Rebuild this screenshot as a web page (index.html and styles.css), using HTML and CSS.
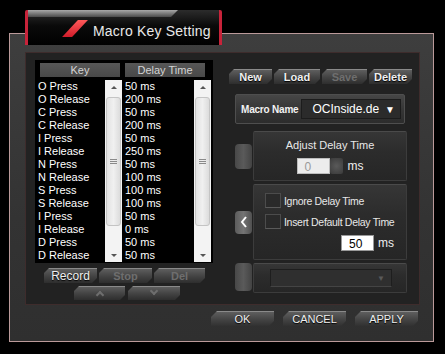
FILE: index.html
```html
<!DOCTYPE html>
<html lang="en">
<head>
  <meta charset="UTF-8" />
  <title>Macro Key Setting</title>
  <link rel="stylesheet" href="styles.css">
</head>
<body>
  <div class="screen">
    <!-- Title tab -->
    <div class="tab">
      <span class="tab-slash"></span>
      <span class="tab-title">Macro Key Setting</span>
    </div>

    <div class="frame">
      <div class="panel">
        <!-- Left: macro event list -->
        <div class="left">
          <div class="list">
            <div class="col col-key">
              <div class="col-head">Key</div>
              <div class="col-body">
                <ul class="rows">
                  <li>O Press</li>
                  <li>O Release</li>
                  <li>C Press</li>
                  <li>C Release</li>
                  <li>I Press</li>
                  <li>I Release</li>
                  <li>N Press</li>
                  <li>N Release</li>
                  <li>S Press</li>
                  <li>S Release</li>
                  <li>I Press</li>
                  <li>I Release</li>
                  <li>D Press</li>
                  <li>D Release</li>
                </ul>
                <div class="scrollbar">
                  <div class="sb-btn"><span class="arr-up"></span></div>
                  <div class="sb-track"><div class="sb-thumb"><span class="grip"></span></div></div>
                  <div class="sb-btn"><span class="arr-down"></span></div>
                </div>
              </div>
            </div>
            <div class="col col-delay">
              <div class="col-head">Delay Time</div>
              <div class="col-body">
                <ul class="rows">
                  <li>50 ms</li>
                  <li>200 ms</li>
                  <li>50 ms</li>
                  <li>200 ms</li>
                  <li>50 ms</li>
                  <li>250 ms</li>
                  <li>50 ms</li>
                  <li>100 ms</li>
                  <li>100 ms</li>
                  <li>100 ms</li>
                  <li>50 ms</li>
                  <li>0 ms</li>
                  <li>50 ms</li>
                  <li>50 ms</li>
                </ul>
                <div class="scrollbar">
                  <div class="sb-btn"><span class="arr-up"></span></div>
                  <div class="sb-track"><div class="sb-thumb"><span class="grip"></span></div></div>
                  <div class="sb-btn"><span class="arr-down"></span></div>
                </div>
              </div>
            </div>
          </div>

          <div class="btn-row rec-row">
            <button class="btn w53">Record</button>
            <button class="btn w53 off">Stop</button>
            <button class="btn w51 off">Del</button>
          </div>
          <div class="btn-row move-row">
            <button class="btn w51 off"><span class="chev-up"></span></button>
            <button class="btn w52 off"><span class="chev-down"></span></button>
          </div>
        </div>

        <!-- Right: macro settings -->
        <div class="right">
          <div class="top-btns">
            <button class="btn w43">New</button>
            <button class="btn w46">Load</button>
            <button class="btn w45 off">Save</button>
            <button class="btn w43">Delete</button>
          </div>

          <div class="macro-name">
            <span class="label">Macro Name</span>
            <div class="select">
              <span>OCInside.de</span>
              <span class="select-arrow">&#9660;</span>
            </div>
          </div>

          <div class="options">
            <div class="side-btn off h25"></div>
            <div class="box adjust">
              <div class="box-title">Adjust Delay Time</div>
              <div class="adjust-row">
                <span class="num-input disabled">0</span>
                <span class="spinner"></span>
                <span class="unit">ms</span>
              </div>
            </div>

            <div class="side-btn h23">
              <svg width="8" height="12" viewBox="0 0 8 12"><path d="M6 1 L2 6 L6 11" fill="none" stroke="#fff" stroke-width="2"/></svg>
            </div>
            <div class="box ignore">
              <label class="check"><span class="check-box"></span>Ignore Delay Time</label>
              <label class="check"><span class="check-box"></span>Insert Default Delay Time</label>
              <div class="default-row">
                <span class="num-input">50</span>
                <span class="unit">ms</span>
              </div>
            </div>

            <div class="side-btn off h28"></div>
            <div class="box device">
              <div class="device-select"><span class="device-arrow">&#9660;</span></div>
            </div>
          </div>
        </div>
      </div>

      <div class="footer">
        <button class="btn big">OK</button>
        <button class="btn big">CANCEL</button>
        <button class="btn big">APPLY</button>
      </div>
    </div>
  </div>
</body>
</html>
```

FILE: styles.css
```css
/* ---------- Base ---------- */
* {
  box-sizing: border-box;
  margin: 0;
  padding: 0;
}
html, body {
  background: #000;
  font-family: "Liberation Sans", Arial, sans-serif;
  font-size: 11px;
  color: #e6e6e6;
}
.screen {
  padding: 10px 0 0 9px;
}

/* ---------- Title tab ---------- */
.tab {
  position: relative;
  z-index: 2;
  display: flex;
  align-items: center;
  width: 197px;
  height: 35px;
  margin-left: 16px;
  padding-left: 42px;
  background: linear-gradient(#2c2c2c, #0a0a0a 45%, #000);
  border-left: 3px solid #c8233a;
  border-right: 3px solid #c8233a;
  border-radius: 2px 2px 0 0;
}
.tab::before {
  content: "";
  position: absolute;
  top: 0;
  left: 0;
  width: 150px;
  height: 7px;
  background: linear-gradient(#a8a8a8, #4a4a4a);
  clip-path: polygon(0 0, 100% 0, calc(100% - 7px) 100%, 0 100%);
}
.tab-slash {
  display: inline-block;
  width: 10px;
  height: 17px;
  margin-top: 1px;
  background: linear-gradient(#ff5a5a, #d01c2a);
  transform: skewX(-43deg);
}
.tab-title {
  margin-left: 13px;
  padding-top: 6px;
  font-size: 14px;
  color: #e8e8e8;
  letter-spacing: 0.2px;
}

/* ---------- Dialog frame ---------- */
.frame {
  width: 425px;
  height: 309px;
  margin-top: -12px;
  padding: 18px 13px 0 15px;
  border: 1px solid #bb9a9a;
  background: linear-gradient(#3e3e3e, #333 60%, #2f2f2f);
}
.panel {
  display: flex;
  width: 395px;
  height: 253px;
  padding: 7px 0 0 9px;
  background: #222;
  border: 1px solid #3e2c2c;
}

/* ---------- Event list ---------- */
.left {
  width: 178px;
}
.list {
  display: flex;
  gap: 3px;
  height: 203px;
  padding: 3px 2px 0 3px;
  background: #000;
}
.col-key { width: 84px; }
.col-delay { width: 86px; }
.col-head {
  height: 14px;
  line-height: 14px;
  background: linear-gradient(#575757, #484848);
  color: #d4d4d4;
  text-align: center;
}
.col-key .col-head { margin: 0 2px; }
.col-delay .col-head { margin-right: 6px; }
.col-body {
  display: flex;
  height: 182px;
  margin-top: 3px;
}
.rows {
  flex: 1;
  list-style: none;
  line-height: 13px;
  color: #fff;
}

/* scrollbar */
.scrollbar {
  display: flex;
  flex-direction: column;
  width: 17px;
  background: #f3f3f3;
}
.sb-btn {
  display: flex;
  align-items: center;
  justify-content: center;
  height: 14px;
}
.arr-up, .arr-down {
  width: 0;
  height: 0;
  border-left: 3px solid transparent;
  border-right: 3px solid transparent;
}
.arr-up { border-bottom: 3px solid #555; }
.arr-down { border-top: 3px solid #555; }
.sb-track {
  flex: 1;
  padding: 3px 1px 0;
}
.sb-thumb {
  display: flex;
  align-items: center;
  justify-content: center;
  height: 129px;
  background: linear-gradient(90deg, #e2e2e2, #f0f0f0 50%, #dcdcdc);
  border: 1px solid #c4c4c4;
  border-radius: 3px;
}
.grip {
  width: 7px;
  height: 5px;
  background: repeating-linear-gradient(#8a8a8a 0 1px, transparent 1px 2px);
}

/* ---------- Buttons ---------- */
.btn {
  display: flex;
  align-items: center;
  justify-content: center;
  height: 15px;
  border: none;
  font-family: inherit;
  font-size: 11px;
  font-weight: bold;
  color: #efefef;
  text-shadow: 0 1px 1px #000;
  background: linear-gradient(#8a8a8a 0 1px, #5e5e5e 1px, #434343 55%, #2e2e2e);
  clip-path: polygon(5px 0, 100% 0, 100% calc(100% - 5px), calc(100% - 5px) 100%, 0 100%, 0 5px);
}
.btn.off {
  color: #6e6e6e;
  text-shadow: none;
}
.w43 { width: 43px; }
.w45 { width: 45px; }
.w46 { width: 46px; }
.w51 { width: 51px; }
.w52 { width: 52px; }
.w53 { width: 53px; }

.btn-row {
  display: flex;
}
.rec-row {
  gap: 2px;
  margin-top: 5px;
  padding-left: 9px;
}
.rec-row .btn:first-child {
  font-size: 12px;
  font-weight: normal;
}
.move-row {
  gap: 3px;
  margin-top: 3px;
  padding-left: 39px;
}
.move-row .btn { height: 14px; }
.chev-up, .chev-down {
  width: 6px;
  height: 6px;
  border-left: 2px solid #6e6e6e;
  border-top: 2px solid #6e6e6e;
}
.chev-up { transform: translateY(2px) rotate(45deg); }
.chev-down { transform: translateY(-2px) rotate(225deg); }

/* ---------- Right column ---------- */
.right {
  width: 184px;
  margin-left: 15px;
}
.top-btns {
  display: flex;
  gap: 2px;
  margin-top: 9px;
  padding-left: 1px;
}
.macro-name {
  display: flex;
  align-items: center;
  width: 170px;
  height: 30px;
  margin: 10px 0 0 7px;
  padding: 0 3px 0 5px;
  background: linear-gradient(#464646, #363636 50%, #2c2c2c);
  border: 1px solid #4e4e4e;
  border-radius: 2px;
}
.macro-name .label {
  font-size: 10px;
  font-weight: bold;
  white-space: nowrap;
  letter-spacing: -0.2px;
  color: #f2f2f2;
}
.select {
  display: flex;
  align-items: center;
  justify-content: flex-end;
  gap: 6px;
  width: 100px;
  height: 20px;
  margin-left: auto;
  padding-right: 5px;
  background: #2b2b2b;
  border: 1px solid #1c1c1c;
  font-size: 12px;
  white-space: nowrap;
  color: #fff;
}
.select-arrow { font-size: 10px; }

.options {
  display: grid;
  grid-template-columns: 17px 154px;
  grid-template-rows: 50px 76px 30px;
  column-gap: 1px;
  row-gap: 3px;
  margin: 7px 0 0 7px;
}
.side-btn {
  display: flex;
  align-items: center;
  justify-content: center;
  align-self: center;
  background: linear-gradient(90deg, #5c5c5c, #747474 50%, #505050);
  border-radius: 4px;
}
.side-btn.off {
  background: linear-gradient(90deg, #484848, #5a5a5a 50%, #434343);
}
.h23 { height: 23px; }
.h25 { height: 25px; }
.h28 { height: 28px; align-self: start; }

.box {
  background: linear-gradient(#363636, #2c2c2c 40%, #262626);
  border: 1px solid #3c3c3c;
  border-top-color: #4a4a4a;
  border-radius: 2px;
}
.adjust {
  padding-top: 6px;
}
.box-title {
  line-height: 14px;
  text-align: center;
  color: #e8e8e8;
}
.adjust-row {
  display: flex;
  align-items: center;
  justify-content: center;
  margin-top: 6px;
}
.num-input {
  display: inline-block;
  width: 33px;
  height: 16px;
  padding-left: 7px;
  line-height: 16px;
  font-size: 12px;
  background: #fff;
  color: #000;
  border: 1px solid #999;
}
.num-input.disabled {
  background: #ececec;
  color: #9a9a9a;
  border-color: #bdbdbd;
}
.spinner {
  width: 13px;
  height: 16px;
  background: radial-gradient(circle, #5a5a5a, #3a3a3a);
  border-radius: 2px;
}
.unit {
  margin-left: 5px;
  font-size: 12px;
  color: #eee;
}

.ignore {
  display: flex;
  flex-direction: column;
  gap: 6px;
  padding: 8px 12px 0 11px;
}
.check {
  display: flex;
  align-items: center;
  height: 15px;
  font-size: 10.5px;
  letter-spacing: -0.3px;
  white-space: nowrap;
  color: #e8e8e8;
}
.check-box {
  flex: none;
  width: 16px;
  height: 15px;
  margin-right: 3px;
  background: #2a2a2a;
  border: 1px solid #4c4c4c;
  border-bottom-color: #5a5a5a;
}
.default-row {
  display: flex;
  align-items: center;
  justify-content: flex-end;
}
.default-row .unit { margin-left: 4px; }

.device {
  padding: 5px 0 0 16px;
}
.device-select {
  display: flex;
  align-items: center;
  justify-content: flex-end;
  width: 122px;
  height: 18px;
  padding-right: 6px;
  background: #2f2f2f;
  border: 1px solid #1e1e1e;
  border-bottom-color: #444;
}
.device-arrow {
  font-size: 8px;
  color: #5a5a5a;
}

/* ---------- Footer ---------- */
.footer {
  display: flex;
  justify-content: flex-end;
  gap: 9px;
  margin-top: 6px;
  padding-right: 2px;
}
.btn.big {
  width: 63px;
  height: 16px;
  font-weight: normal;
  font-size: 11px;
  clip-path: polygon(6px 0, 100% 0, 100% calc(100% - 6px), calc(100% - 6px) 100%, 0 100%, 0 6px);
}
```
